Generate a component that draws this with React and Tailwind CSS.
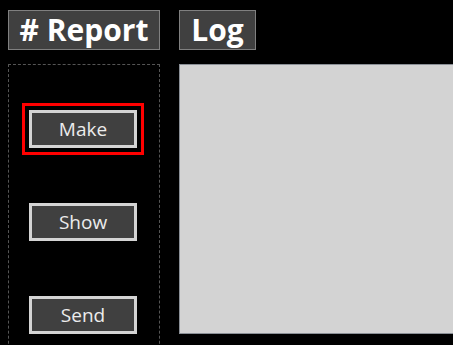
import React from 'react';

const font = { fontFamily: '"Open Sans", "DejaVu Sans", sans-serif' };

function Btn({ label, active }) {
  return (
    <div className={active ? 'outline-[3px] outline-solid outline-[#ff0000] outline-offset-[4px]' : ''}>
      <button className="w-[108px] h-[38px] bg-[#404040] border-[3px] border-[#d4d4d4] text-[#ececec] text-[19px] leading-none flex items-center justify-center">
        {label}
      </button>
    </div>
  );
}

export default function App() {
  return (
    <div className="w-screen h-[345px] bg-black overflow-hidden" style={font}>
      {/* Headers */}
      <div className="flex gap-[19px] pl-[8px] pt-[10px]">
        <div className="w-[152px] h-[40px] bg-[#404040] border border-[#808080] flex items-center justify-center text-white text-[30px] font-bold leading-none">
          # Report
        </div>
        <div className="w-[77px] h-[40px] bg-[#404040] border border-[#808080] flex items-center justify-center text-white text-[30px] font-bold leading-none">
          Log
        </div>
      </div>

      {/* Body */}
      <div className="flex gap-[19px] pl-[8px] pt-[14px]">
        <div className="w-[152px] h-[320px] shrink-0 border border-dashed border-[#555555] flex flex-col items-center pt-[45px] pr-[2px] gap-[55px]">
          <Btn label="Make" active />
          <Btn label="Show" />
          <Btn label="Send" />
        </div>
        <div className="w-[320px] h-[270px] shrink-0 bg-[#d3d3d3] border border-[#8a8f96]" />
      </div>
    </div>
  );
}
